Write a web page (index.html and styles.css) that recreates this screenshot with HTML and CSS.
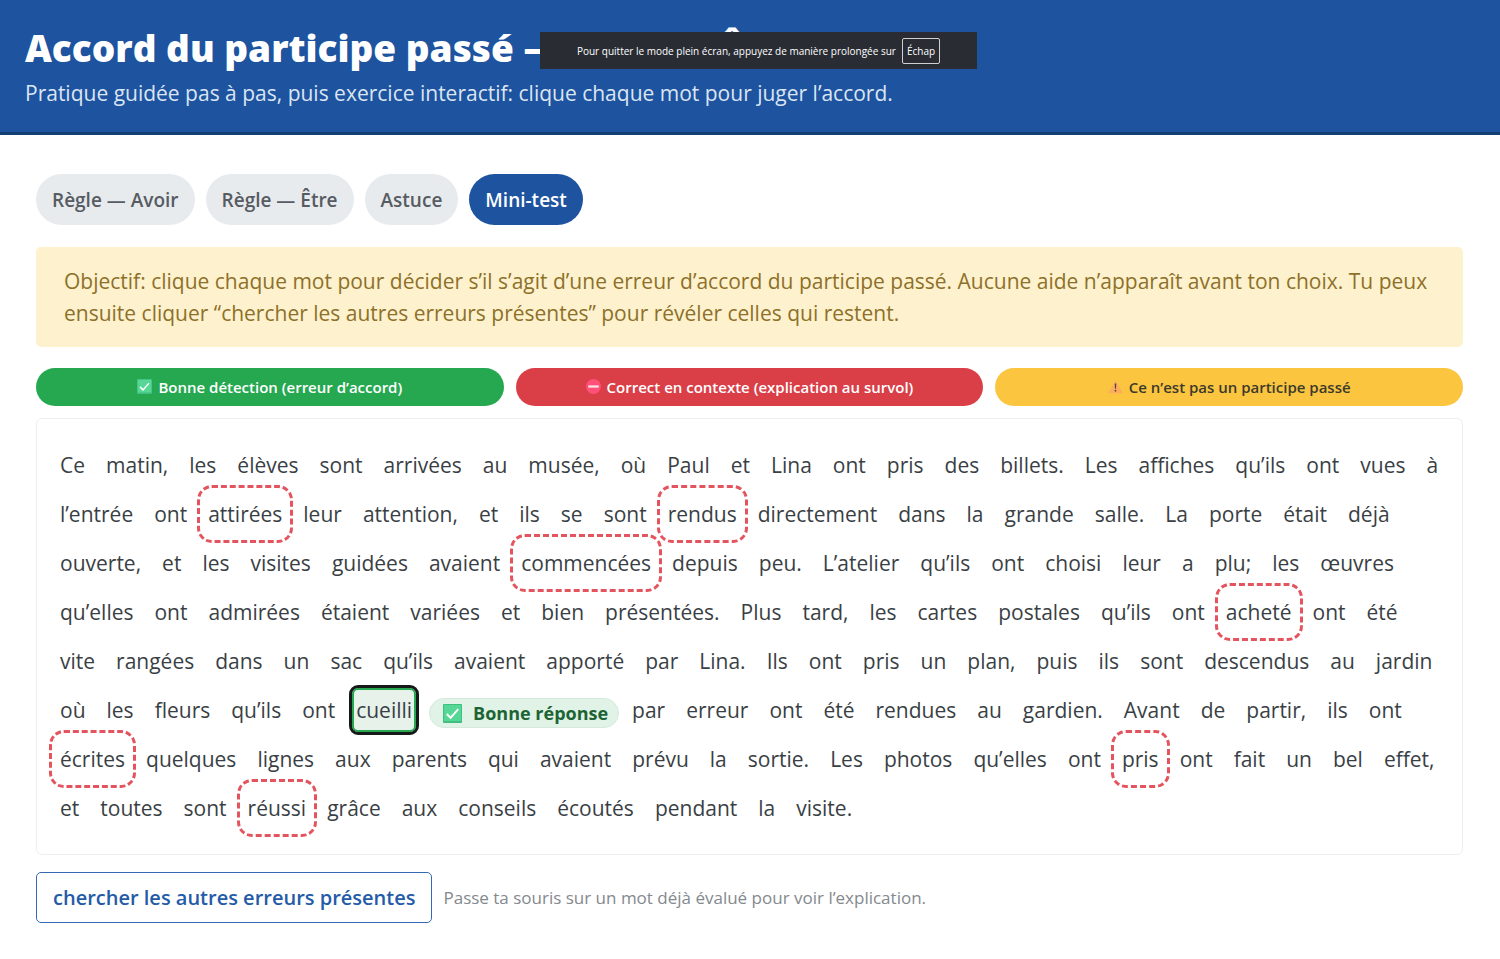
FILE: index.html
```html
<!DOCTYPE html>
<html lang="fr">
<head>
<meta charset="utf-8">
<meta name="viewport" content="width=device-width, initial-scale=1">
<title>Accord du participe passé</title>
<link rel="stylesheet" href="styles.css">
</head>
<body>
<svg class="defs" aria-hidden="true">
  <symbol id="check" viewBox="0 0 20 20"><rect width="20" height="20" rx="1" fill="#3fbf7f"/><rect x="1" y="1" width="18" height="17" fill="#57d795"/><path d="M4 10.5l4 4 8-9" fill="none" stroke="#fff" stroke-width="2"/></symbol>
  <symbol id="stop" viewBox="0 0 20 20"><circle cx="10" cy="10" r="10" fill="#ff5078"/><rect x="3" y="8.5" width="14" height="3" fill="#ffe0e8"/></symbol>
  <symbol id="warn" viewBox="0 0 20 20"><path d="M10 2L20 19H0z" fill="#fbad5c"/><path d="M9 6h2l-.3 7H9.3z" fill="#5b4232"/><circle cx="10" cy="15.5" r="1.2" fill="#5b4232"/></symbol>
</svg>
<header class="header">
  <h1>Accord du participe passé — Avoir &amp; Être</h1>
  <p>Pratique guidée pas à pas, puis exercice interactif: clique chaque mot pour juger l’accord.</p>
  <div class="toast">Pour quitter le mode plein écran, appuyez de manière prolongée sur <kbd>Échap</kbd></div>
</header>
<main class="main">
  <nav class="tabs">
    <button type="button">Règle — Avoir</button>
    <button type="button">Règle — Être</button>
    <button type="button">Astuce</button>
    <button type="button" class="active">Mini-test</button>
  </nav>
  <p class="goal">Objectif: clique chaque mot pour décider s’il s’agit d’une erreur d’accord du participe passé. Aucune aide n’apparaît avant ton choix. Tu peux ensuite cliquer “chercher les autres erreurs présentes” pour révéler celles qui restent.</p>
  <div class="legend">
    <span class="green"><svg><use href="#check"/></svg>Bonne détection (erreur d’accord)</span>
    <span class="red"><svg><use href="#stop"/></svg>Correct en contexte (explication au survol)</span>
    <span class="yellow"><svg><use href="#warn"/></svg>Ce n’est pas un participe passé</span>
  </div>
  <section class="text">
    <div class="line"><button>Ce</button><button>matin,</button><button>les</button><button>élèves</button><button>sont</button><button>arrivées</button><button>au</button><button>musée,</button><button>où</button><button>Paul</button><button>et</button><button>Lina</button><button>ont</button><button>pris</button><button>des</button><button>billets.</button><button>Les</button><button>affiches</button><button>qu’ils</button><button>ont</button><button>vues</button><button>à</button></div>
    <div class="line"><button>l’entrée</button><button>ont</button><button class="missed">attirées</button><button>leur</button><button>attention,</button><button>et</button><button>ils</button><button>se</button><button>sont</button><button class="missed">rendus</button><button>directement</button><button>dans</button><button>la</button><button>grande</button><button>salle.</button><button>La</button><button>porte</button><button>était</button><button>déjà</button></div>
    <div class="line"><button>ouverte,</button><button>et</button><button>les</button><button>visites</button><button>guidées</button><button>avaient</button><button class="missed">commencées</button><button>depuis</button><button>peu.</button><button>L’atelier</button><button>qu’ils</button><button>ont</button><button>choisi</button><button>leur</button><button>a</button><button>plu;</button><button>les</button><button>œuvres</button></div>
    <div class="line"><button>qu’elles</button><button>ont</button><button>admirées</button><button>étaient</button><button>variées</button><button>et</button><button>bien</button><button>présentées.</button><button>Plus</button><button>tard,</button><button>les</button><button>cartes</button><button>postales</button><button>qu’ils</button><button>ont</button><button class="missed">acheté</button><button>ont</button><button>été</button></div>
    <div class="line"><button>vite</button><button>rangées</button><button>dans</button><button>un</button><button>sac</button><button>qu’ils</button><button>avaient</button><button>apporté</button><button>par</button><button>Lina.</button><button>Ils</button><button>ont</button><button>pris</button><button>un</button><button>plan,</button><button>puis</button><button>ils</button><button>sont</button><button>descendus</button><button>au</button><button>jardin</button></div>
    <div class="line"><button>où</button><button>les</button><button>fleurs</button><button>qu’ils</button><button>ont</button><button class="found">cueilli</button><span class="badge"><svg><use href="#check"/></svg>Bonne réponse</span><button>par</button><button>erreur</button><button>ont</button><button>été</button><button>rendues</button><button>au</button><button>gardien.</button><button>Avant</button><button>de</button><button>partir,</button><button>ils</button><button>ont</button></div>
    <div class="line"><button class="missed">écrites</button><button>quelques</button><button>lignes</button><button>aux</button><button>parents</button><button>qui</button><button>avaient</button><button>prévu</button><button>la</button><button>sortie.</button><button>Les</button><button>photos</button><button>qu’elles</button><button>ont</button><button class="missed">pris</button><button>ont</button><button>fait</button><button>un</button><button>bel</button><button>effet,</button></div>
    <div class="line"><button>et</button><button>toutes</button><button>sont</button><button class="missed">réussi</button><button>grâce</button><button>aux</button><button>conseils</button><button>écoutés</button><button>pendant</button><button>la</button><button>visite.</button></div>
  </section>
  <div class="actions">
    <button type="button">chercher les autres erreurs présentes</button>
    <span>Passe ta souris sur un mot déjà évalué pour voir l’explication.</span>
  </div>
</main>
</body>
</html>
```
FILE: styles.css
```css
* { box-sizing: border-box; }
body { margin: 0; background: #fff; color: #3a3f45; font-family: "Open Sans", "Noto Sans", sans-serif; font-size: 21px; }
button { font: inherit; color: inherit; margin: 0; cursor: pointer; }
.defs { display: none; }
.header { position: relative; padding: 22px 25px 24px; background: #1d539f; border-bottom: 3px solid #143f75; color: #fff; }
.header h1 { margin: 0; font-size: 37px; line-height: 52px; font-weight: 800; }
.header p { margin: 4px 0 0; line-height: 30px; color: #dbe5f3; }
.toast { position: absolute; left: 36%; top: 32px; width: 437px; height: 37px; display: flex; align-items: center; justify-content: center; gap: 6px; background: #292c33; color: #fff; font-size: 10px; white-space: nowrap; }
.toast kbd { font: inherit; padding: 5px 4px; border: 1px solid #d0d0d0; border-radius: 2px; }
.main { padding: 39px 37px 36px 36px; }
.tabs { display: flex; gap: 11px; }
.tabs button { height: 51px; padding: 0 16px; border: 0; border-radius: 26px; background: #e8ebee; color: #565c62; font-size: 19px; font-weight: 600; }
.tabs .active { background: #1d539f; color: #fff; }
.goal { margin: 22px 0 21px; padding: 18px 28px; border-radius: 5px; background: #fef2ce; color: #8d7029; line-height: 32px; }
.legend { display: grid; grid-template-columns: repeat(3, 1fr); gap: 12px; font-size: 15px; font-weight: 600; }
.legend span { display: flex; align-items: center; justify-content: center; gap: 6px; height: 38px; padding-bottom: 1px; border-radius: 19px; color: #fff; }
.legend svg { width: 15px; height: 15px; }
.legend .green { background: #25a850; }
.legend .red { background: #da3e47; }
.legend .yellow { background: #fbc540; color: #3b3a2c; }
.text { display: grid; gap: 5px; margin-top: 12px; padding: 24px 19px; border: 1px solid #eceff2; border-radius: 6px; }
.line { display: flex; align-items: center; gap: 13px; white-space: nowrap; }
.line button { height: 44px; padding: 0 4px; border: 0; border-radius: 6px; background: none; }
.line .missed { outline: 3px dashed #e4545e; outline-offset: 4px; border-radius: 8px; }
.line .found { background: #e6f2ea; box-shadow: inset 0 0 0 2px #25a850; outline: 3px solid #151a18; }
.badge { display: flex; align-items: center; gap: 11px; height: 30px; margin: 6px -4px 0 0; padding: 0 10px 0 13px; border: 1px solid #d4ebdc; border-radius: 15px; background: #e1f2e7; color: #1d6434; font-size: 18px; font-weight: 700; }
.badge svg { width: 19px; height: 19px; }
.actions { display: flex; align-items: center; gap: 11px; margin-top: 17px; color: #84898e; font-size: 17px; }
.actions button { height: 51px; padding: 0 16px; border: 1px solid #3569b4; border-radius: 5px; background: #fff; color: #245ba9; font-size: 20px; font-weight: 600; }
```
